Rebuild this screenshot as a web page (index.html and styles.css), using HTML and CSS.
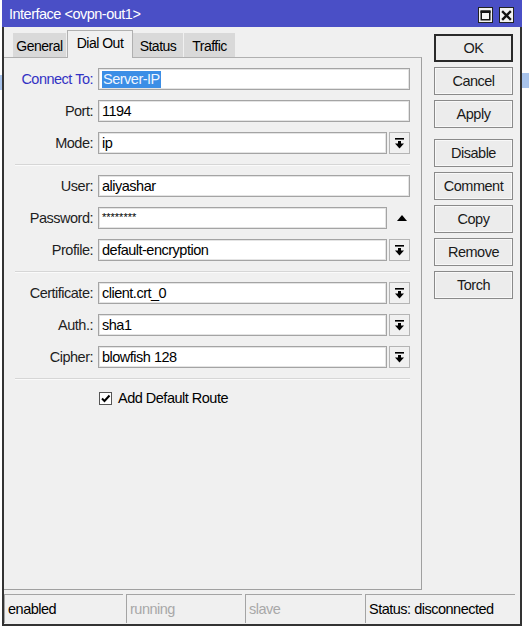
FILE: index.html
```html
<!DOCTYPE html>
<html>
<head>
<meta charset="utf-8">
<link rel="stylesheet" href="styles.css">
</head>
<body>
<div class="screen">
  <div class="bg-left"><div class="blip"></div></div>
  <div class="window">
    <div class="titlebar">
      <span class="title">Interface &lt;ovpn-out1&gt;</span>
      <div class="title-btns">
        <span class="tbtn"><svg width="11" height="11" viewBox="0 0 11 11"><rect x="1.25" y="1.25" width="8.5" height="8.5" fill="none" stroke="#111" stroke-width="1.5"/><rect x="0.5" y="0.5" width="10" height="2.5" fill="#111"/></svg></span>
        <span class="tbtn"><svg width="11" height="11" viewBox="0 0 11 11"><path d="M2 2 L9 9 M9 2 L2 9" stroke="#111" stroke-width="2.4" stroke-linecap="square"/></svg></span>
      </div>
    </div>
    <div class="frame">
      <div class="main">
        <div class="leftcol">
          <div class="tabs">
            <div class="tab t-general">General</div>
            <div class="tab active t-dial">Dial Out</div>
            <div class="tab t-status">Status</div>
            <div class="tab t-traffic">Traffic</div>
          </div>
          <div class="panel">
            <div class="row">
              <div class="label focus">Connect To:</div>
              <div class="field"><span class="sel">Server-IP</span></div>
            </div>
            <div class="row">
              <div class="label">Port:</div>
              <div class="field">1194</div>
            </div>
            <div class="row">
              <div class="label">Mode:</div>
              <div class="combo">
                <div class="field narrow">ip</div>
                <div class="ddbtn"><svg width="9" height="11" viewBox="0 0 9 11"><rect x="0" y="0" width="9" height="1.6" fill="#000"/><rect x="3" y="3" width="3" height="3.5" fill="#000"/><polygon points="0,5.5 9,5.5 4.5,10.5" fill="#000"/></svg></div>
              </div>
            </div>
            <div class="sep"></div>
            <div class="row first">
              <div class="label">User:</div>
              <div class="field">aliyashar</div>
            </div>
            <div class="row">
              <div class="label">Password:</div>
              <div class="combo">
                <div class="field narrow pw">********</div>
                <div class="upicon"><svg width="10" height="6" viewBox="0 0 10 6"><polygon points="0,6 10,6 5,0" fill="#000"/></svg></div>
              </div>
            </div>
            <div class="row">
              <div class="label">Profile:</div>
              <div class="combo">
                <div class="field narrow">default-encryption</div>
                <div class="ddbtn"><svg width="9" height="11" viewBox="0 0 9 11"><rect x="0" y="0" width="9" height="1.6" fill="#000"/><rect x="3" y="3" width="3" height="3.5" fill="#000"/><polygon points="0,5.5 9,5.5 4.5,10.5" fill="#000"/></svg></div>
              </div>
            </div>
            <div class="sep"></div>
            <div class="row first">
              <div class="label">Certificate:</div>
              <div class="combo">
                <div class="field narrow">client.crt_0</div>
                <div class="ddbtn"><svg width="9" height="11" viewBox="0 0 9 11"><rect x="0" y="0" width="9" height="1.6" fill="#000"/><rect x="3" y="3" width="3" height="3.5" fill="#000"/><polygon points="0,5.5 9,5.5 4.5,10.5" fill="#000"/></svg></div>
              </div>
            </div>
            <div class="row">
              <div class="label">Auth.:</div>
              <div class="combo">
                <div class="field narrow">sha1</div>
                <div class="ddbtn"><svg width="9" height="11" viewBox="0 0 9 11"><rect x="0" y="0" width="9" height="1.6" fill="#000"/><rect x="3" y="3" width="3" height="3.5" fill="#000"/><polygon points="0,5.5 9,5.5 4.5,10.5" fill="#000"/></svg></div>
              </div>
            </div>
            <div class="row">
              <div class="label">Cipher:</div>
              <div class="combo">
                <div class="field narrow">blowfish 128</div>
                <div class="ddbtn"><svg width="9" height="11" viewBox="0 0 9 11"><rect x="0" y="0" width="9" height="1.6" fill="#000"/><rect x="3" y="3" width="3" height="3.5" fill="#000"/><polygon points="0,5.5 9,5.5 4.5,10.5" fill="#000"/></svg></div>
              </div>
            </div>
            <div class="sep"></div>
            <div class="checkrow">
              <span class="checkbox"><svg width="11" height="11" viewBox="0 0 11 11"><path d="M2 5.5 L4.5 8 L9.5 2.5" fill="none" stroke="#000" stroke-width="2"/></svg></span>
              <span class="checklabel">Add Default Route</span>
            </div>
          </div>
        </div>
        <div class="buttons">
          <div class="btn default">OK</div>
          <div class="btn">Cancel</div>
          <div class="btn">Apply</div>
          <div class="btn spaced">Disable</div>
          <div class="btn">Comment</div>
          <div class="btn">Copy</div>
          <div class="btn">Remove</div>
          <div class="btn">Torch</div>
        </div>
      </div>
      <div class="statusbar">
        <div class="seg s1">enabled</div>
        <div class="seg s2 dim">running</div>
        <div class="seg s3 dim">slave</div>
        <div class="seg s4">Status: disconnected</div>
      </div>
    </div>
  </div>
  <div class="bg-right"><div class="blip r"></div></div>
</div>
</body>
</html>
```
FILE: styles.css
```css
html, body {
  margin: 0;
  padding: 0;
  background: #ffffff;
}
body {
  font-family: "Liberation Sans", Arial, sans-serif;
  font-size: 14.5px;
  letter-spacing: -0.5px;
  color: #000;
}
.screen {
  display: flex;
  height: 627px;
  overflow: hidden;
}
.bg-left {
  width: 2px;
  flex: none;
}
.bg-right {
  flex: 1;
}
.blip {
  margin-top: 75px;
  height: 15px;
  background: #a9c4ec;
}
.blip.r {
  margin-top: 73px;
}
.window {
  width: 520px;
  flex: none;
  display: flex;
  flex-direction: column;
}
.titlebar {
  height: 27px;
  background: #4a4fc6;
  display: flex;
  align-items: center;
  padding: 0 8px 0 7px;
  box-sizing: border-box;
}
.title {
  color: #fff;
  padding-top: 1px;
}
.title-btns {
  margin-left: auto;
  display: flex;
  gap: 6px;
  align-self: flex-start;
  margin-top: 7px;
}
.tbtn {
  width: 15px;
  height: 16px;
  box-sizing: border-box;
  background: #f2f2f2;
  border: 1px solid #222;
  display: flex;
  align-items: center;
  justify-content: center;
}
.frame {
  height: 599px;
  box-sizing: border-box;
  border: 2px solid #333;
  border-top: none;
  background: #f0f0f0;
  display: flex;
  flex-direction: column;
}
.main {
  height: 563px;
  display: flex;
}
.leftcol {
  width: 418px;
  display: flex;
  flex-direction: column;
}
.tabs {
  height: 30px;
  display: flex;
  align-items: flex-end;
  padding-left: 9px;
  box-sizing: border-box;
}
.tab {
  height: 24px;
  box-sizing: border-box;
  background: #d9d9d9;
  display: flex;
  align-items: center;
  justify-content: center;
  padding-top: 2px;
  font-size: 14px;
}
.t-general { width: 53px; margin-right: 1px; }
.t-dial { width: 66px; }
.t-status { width: 50px; margin-right: 1px; }
.t-traffic { width: 51px; }
.tab.active {
  height: 28px;
  background: #f0f0f0;
  border: 1px solid #b0b0b0;
  border-bottom: none;
  margin-bottom: -1px;
  position: relative;
  z-index: 1;
  padding-top: 0;
  padding-bottom: 3px;
}
.panel {
  flex: 1;
  border-top: 1px solid #b0b0b0;
  border-right: 1px solid #a0a0a0;
  border-bottom: 1px solid #a0a0a0;
  padding-top: 10px;
  box-sizing: border-box;
}
.row {
  display: flex;
  align-items: center;
  height: 22px;
  margin-top: 10px;
}
.row:first-child, .row.first {
  margin-top: 0;
}
.label {
  width: 89px;
  margin-right: 5px;
  text-align: right;
  color: #1e1e1e;
}
.label.focus {
  color: #3333c4;
}
.field {
  width: 312px;
  height: 22px;
  box-sizing: border-box;
  background: #fff;
  border: 1px solid #a4a4a4;
  box-shadow: inset 0 0 0 1px #e4e4e4;
  padding-left: 3px;
  display: flex;
  align-items: center;
  white-space: nowrap;
}
.field.narrow {
  width: 289px;
}
.field.pw {
  font-size: 11px;
  letter-spacing: 0;
  align-items: flex-start;
  padding-top: 3px;
}
.sel {
  background: #3b8ee6;
  color: #eef5ff;
  line-height: 17px;
  padding: 0 1px;
}
.combo {
  display: flex;
  gap: 2px;
  width: 312px;
}
.ddbtn {
  width: 21px;
  height: 22px;
  box-sizing: border-box;
  border: 1px solid #b4b4b4;
  background: #f0f0f0;
  display: flex;
  align-items: center;
  justify-content: center;
}
.upicon {
  width: 21px;
  height: 22px;
  display: flex;
  align-items: center;
  justify-content: center;
  padding-left: 5px;
  box-sizing: border-box;
}
.sep {
  margin: 10px 0 9px 11px;
  width: 395px;
  height: 1px;
  background: #d6d6d6;
  border-bottom: 1px solid #fafafa;
}
.checkrow {
  display: flex;
  align-items: center;
  height: 16px;
  margin-top: 10px;
  padding-left: 95px;
}
.checkbox {
  width: 13px;
  height: 13px;
  box-sizing: border-box;
  border: 1px solid #555;
  background: #fff;
  display: flex;
  align-items: center;
  justify-content: center;
}
.checklabel {
  margin-left: 6px;
}
.buttons {
  width: 98px;
  box-sizing: border-box;
  padding: 7px 7px 0 12px;
  display: flex;
  flex-direction: column;
  gap: 5px;
}
.btn {
  width: 79px;
  height: 28px;
  box-sizing: border-box;
  border: 1px solid #8a8a8a;
  box-shadow: inset 0 0 0 1px #f8f8f8;
  background: #ececec;
  display: flex;
  align-items: center;
  justify-content: center;
  color: #1a1a1a;
}
.btn.default {
  border: 2px solid #2a2a2a;
  box-shadow: none;
}
.btn.spaced {
  margin-top: 6px;
}
.statusbar {
  margin-top: 4px;
  height: 29px;
  display: flex;
  gap: 3px;
}
.seg {
  box-sizing: border-box;
  border-top: 1px solid #a4a4a4;
  border-left: 1px solid #a4a4a4;
  padding-left: 3px;
  display: flex;
  align-items: center;
  white-space: nowrap;
}
.s1 { width: 119px; }
.s2 { width: 116px; }
.s3 { width: 117px; }
.s4 { width: 150px; }
.dim { color: #a8a8a8; }
```
